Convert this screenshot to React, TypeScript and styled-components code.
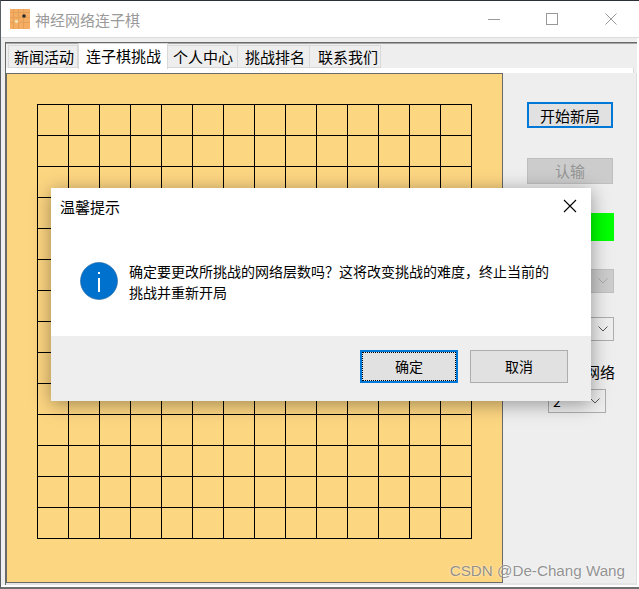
import React from 'react';
import styled, { createGlobalStyle } from 'styled-components';

const CJK = '"Noto Sans CJK SC", "Liberation Sans", sans-serif';

const GlobalStyle = createGlobalStyle`
    html, body {
        margin: 0;
        padding: 0;
        background: #eee;
    }
    body {
        font-family: ${CJK};
        overflow: hidden;
    }
`;

const Window = styled.div`
    position: relative;
    box-sizing: border-box;
    width: 639px;
    height: 589px;
    display: flex;
    flex-direction: column;
    background: #eee;
    border-top: 1px solid #2b3038;
    border-left: 1px solid #5a5f66;
    border-bottom: 2px solid #6f6f6f;
    overflow: hidden;
`;

const TitleBar = styled.div`
    height: 37px;
    flex: none;
    box-sizing: border-box;
    display: flex;
    align-items: center;
    padding-left: 9px;
    background: #fff;
    border-bottom: 1px solid #dcdcdc;
`;

const AppTitle = styled.span`
    margin-left: 5px;
    font-size: 15px;
    color: #9a9a9a;
`;

const WindowControls = styled.div`
    margin-left: auto;
    display: flex;
    align-items: center;
    gap: 46px;
    padding-right: 22px;
    color: #999;

    svg {
        display: block;
    }

    svg:last-child {
        margin-left: 1px;
    }
`;

const Client = styled.div`
    flex: 1;
    min-height: 0;
    display: flex;
    padding: 4px 0 0 4px;
    border-right: 2px solid #fff;
    border-bottom: 2px solid #fff;
`;

const TabFrame = styled.div`
    flex: 1;
    min-width: 0;
    display: flex;
    flex-direction: column;
    background: #eee;
    border-top: 1px solid #696969;
    border-left: 1px solid #696969;
`;

const TabBar = styled.div`
    height: 25px;
    flex: none;
    display: flex;
    align-items: flex-end;
    padding-left: 2px;
    box-shadow: inset 0 1px 0 #a6a6a6;
`;

const Tab = styled.div<{ $active?: boolean; $left: number; $right: number }>`
    box-sizing: border-box;
    height: ${({ $active }) => ($active ? 26 : 23)}px;
    margin-bottom: ${({ $active }) => ($active ? -1 : 0)}px;
    padding: ${({ $active }) => ($active ? '0 0 3px' : '0')};
    padding-left: ${({ $left }) => $left}px;
    padding-right: ${({ $right }) => $right}px;
    display: flex;
    align-items: center;
    font-size: 15px;
    color: #000;
    white-space: nowrap;
    background: ${({ $active }) => ($active ? '#fff' : '#eee')};
    border: 1px solid #d9d9d9;
    border-left-width: ${({ $active }) => ($active ? 1 : 0)}px;
    border-bottom-width: ${({ $active }) => ($active ? 0 : 1)}px;
    position: relative;

    &:first-child {
        border-left-width: 1px;
    }
`;

const PaneStrip = styled.div`
    height: 5px;
    flex: none;
    margin-right: 3px;
    background: #fff;
    border-right: 1px solid #d9d9d9;
`;

const Pane = styled.div`
    flex: 1;
    min-height: 0;
    display: flex;
    background: #eee;
    border-bottom: 2px solid #e4e4e4;
`;

const Board = styled.div`
    width: 497px;
    flex: none;
    box-sizing: border-box;
    padding: 30px 0 0 30px;
    background: #fdd682;
    border: 1px solid #696969;
`;

const Grid = styled.div`
    display: grid;
    grid-template-columns: repeat(14, 31px);
    grid-auto-rows: 31px;
    width: 435px;
    box-sizing: border-box;
    border-top: 1px solid #000;
    border-left: 1px solid #000;
`;

const Cell = styled.div`
    box-sizing: border-box;
    border-right: 1px solid #000;
    border-bottom: 1px solid #000;
`;

const Side = styled.div`
    flex: 1;
    display: flex;
    flex-direction: column;
    align-items: flex-start;
    padding: 29px 0 0 24px;
    border-right: 1px solid #dedede;
`;

const PanelButton = styled.div<{ $focused?: boolean; $disabled?: boolean; $top?: number }>`
    box-sizing: border-box;
    width: 86px;
    height: 26px;
    margin-top: ${({ $top }) => $top ?? 0}px;
    padding-bottom: ${({ $disabled }) => ($disabled ? 2 : 0)}px;
    display: flex;
    align-items: center;
    justify-content: center;
    font-size: 15px;
    color: ${({ $disabled }) => ($disabled ? '#949494' : '#000')};
    background: ${({ $disabled }) => ($disabled ? '#ccc' : '#e1e1e1')};
    border: ${({ $focused, $disabled }) =>
        $focused ? '2px solid #0078d7' : `1px solid ${$disabled ? '#bfbfbf' : '#adadad'}`};
`;

const StatusLight = styled.div`
    width: 87px;
    height: 28px;
    margin-top: 29px;
    background: #00ff00;
`;

const Combo = styled.div<{ $disabled?: boolean; $top: number; $left?: number; $width?: number }>`
    box-sizing: border-box;
    width: ${({ $width }) => $width ?? 87}px;
    height: 24px;
    margin-top: ${({ $top }) => $top}px;
    margin-left: ${({ $left }) => $left ?? 0}px;
    padding: 0 5px 0 4px;
    display: flex;
    align-items: center;
    justify-content: space-between;
    font-size: 14px;
    color: #000;
    background: ${({ $disabled }) => ($disabled ? '#ccc' : '#eee')};
    border: 1px solid ${({ $disabled }) => ($disabled ? '#bfbfbf' : '#adadad')};

    svg {
        margin-left: auto;
        display: block;
    }
`;

const SideLabel = styled.div`
    width: 88px;
    margin-top: 20px;
    height: 22px;
    line-height: 22px;
    font-size: 15px;
    text-align: right;
    white-space: nowrap;
    color: #000;
`;

const Dialog = styled.div`
    position: absolute;
    left: 50px;
    top: 187px;
    width: 540px;
    height: 213px;
    display: flex;
    flex-direction: column;
    background: #fff;
    box-shadow: 0 3px 18px rgba(0, 0, 0, 0.38);
`;

const DialogHeader = styled.div`
    height: 36px;
    flex: none;
    display: flex;
    align-items: center;
    justify-content: space-between;
    padding: 0 14px 0 9px;
    font-size: 15px;
    color: #000;
`;

const DialogBody = styled.div`
    flex: 1;
    display: flex;
    align-items: flex-start;
    padding: 38px 30px 0 29px;
`;

const InfoIcon = styled.svg`
    flex: none;
    display: block;
`;

const Message = styled.div`
    margin: -1px 0 0 11px;
    font-size: 14px;
    line-height: 21px;
    color: #000;
`;

const DialogFooter = styled.div`
    height: 65px;
    flex: none;
    box-sizing: border-box;
    display: flex;
    justify-content: flex-end;
    gap: 12px;
    padding: 14px 23px 0 0;
    background: #eee;
`;

const DialogButton = styled.div<{ $focused?: boolean }>`
    position: relative;
    box-sizing: border-box;
    width: 98px;
    height: 33px;
    padding-bottom: 2px;
    display: flex;
    align-items: center;
    justify-content: center;
    font-size: 14px;
    color: #000;
    background: #e1e1e1;
    border: ${({ $focused }) => ($focused ? '2px solid #0078d7' : '1px solid #adadad')};
    outline: ${({ $focused }) => ($focused ? '1px dotted #000' : 'none')};
    outline-offset: -3px;
`;

const Watermark = styled.div`
    position: absolute;
    right: 14px;
    top: 560px;
    font-family: "Liberation Sans", Arial, sans-serif;
    font-size: 15.2px;
    line-height: 20px;
    color: rgba(120, 120, 120, 0.8);
    text-shadow: 0 0 2px rgba(255, 255, 255, 0.9);
    white-space: nowrap;
`;

const tabs = [
    { name: '新闻活动', left: 5, right: 3 },
    { name: '连子棋挑战', left: 7, right: 6, active: true },
    { name: '个人中心', left: 5, right: 4 },
    { name: '挑战排名', left: 7, right: 4 },
    { name: '联系我们', left: 8, right: 2 },
];

const messageFirstLine = '确定要更改所挑战的网络层数吗\uFF1F这将改变挑战的难度\uFF0C终止当前的';

const AppIcon = () => (
    <svg width="20" height="20" viewBox="0 0 20 20">
        <rect width="20" height="20" fill="#f4ad62" />
        <path
            d="M3.5 0V20M8.5 0V20M13.5 0V20M0 3.5H20M0 8.5H20M0 13.5H20"
            stroke="#c98a45"
            strokeWidth="1"
            opacity="0.35"
        />
        <circle cx="14" cy="7" r="1.8" fill="#2a2a2a" />
        <circle cx="6.5" cy="12.5" r="1.8" fill="#f6dfae" />
    </svg>
);

const Chevron = ({ color }: { color: string }) => (
    <svg width="10" height="6" viewBox="0 0 10 6" fill="none">
        <path d="M0.5 0.5L5 5L9.5 0.5" stroke={color} strokeWidth="1" />
    </svg>
);

export default function App() {
    return (
        <Window>
            <GlobalStyle />
            <TitleBar>
                <AppIcon />
                <AppTitle>神经网络连子棋</AppTitle>
                <WindowControls>
                    <svg width="12" height="12" viewBox="0 0 12 12">
                        <path d="M0 6.5H12" stroke="currentColor" />
                    </svg>
                    <svg width="12" height="12" viewBox="0 0 12 12" fill="none">
                        <rect x="0.5" y="0.5" width="11" height="11" stroke="currentColor" />
                    </svg>
                    <svg width="12" height="12" viewBox="0 0 12 12">
                        <path d="M0.5 0.5L11.5 11.5M11.5 0.5L0.5 11.5" stroke="currentColor" />
                    </svg>
                </WindowControls>
            </TitleBar>
            <Client>
                <TabFrame>
                    <TabBar>
                        {tabs.map((tab) => (
                            <Tab key={tab.name} $active={tab.active} $left={tab.left} $right={tab.right}>
                                {tab.name}
                            </Tab>
                        ))}
                    </TabBar>
                    <PaneStrip />
                    <Pane>
                        <Board>
                            <Grid>
                                {Array.from({ length: 14 * 14 }, (_, i) => (
                                    <Cell key={i} />
                                ))}
                            </Grid>
                        </Board>
                        <Side>
                            <PanelButton $focused>开始新局</PanelButton>
                            <PanelButton $disabled $top={30}>认输</PanelButton>
                            <StatusLight />
                            <Combo $disabled $top={28}>
                                <Chevron color="#a8a8a8" />
                            </Combo>
                            <Combo $top={24}>
                                <Chevron color="#555" />
                            </Combo>
                            <SideLabel>选择网络</SideLabel>
                            <Combo $top={6} $left={21} $width={58}>
                                2
                                <Chevron color="#555" />
                            </Combo>
                        </Side>
                    </Pane>
                </TabFrame>
            </Client>
            <Dialog>
                <DialogHeader>
                    温馨提示
                    <svg width="14" height="14" viewBox="0 0 14 14">
                        <path d="M1 1L13 13M13 1L1 13" stroke="#000" strokeWidth="1.1" fill="none" />
                    </svg>
                </DialogHeader>
                <DialogBody>
                    <InfoIcon width="38" height="38" viewBox="0 0 38 38">
                        <circle cx="19" cy="19" r="18.5" fill="#0072ce" stroke="#1c5f99" strokeWidth="0.6" />
                        <rect x="18" y="16" width="2" height="14" fill="#fff" />
                        <rect x="18" y="10" width="2" height="2" fill="#fff" />
                    </InfoIcon>
                    <Message>
                        {messageFirstLine}
                        <br />
                        挑战并重新开局
                    </Message>
                </DialogBody>
                <DialogFooter>
                    <DialogButton $focused>确定</DialogButton>
                    <DialogButton>取消</DialogButton>
                </DialogFooter>
            </Dialog>
            <Watermark>CSDN @De-Chang Wang</Watermark>
        </Window>
    );
}
